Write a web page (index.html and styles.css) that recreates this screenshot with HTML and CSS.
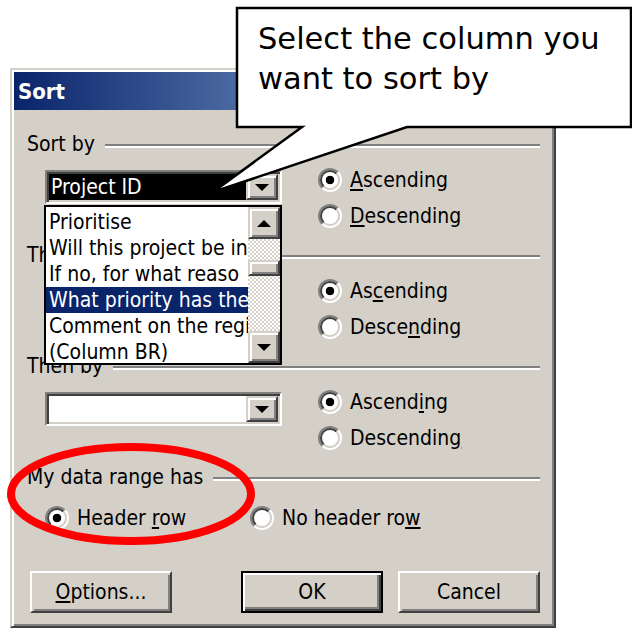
FILE: index.html
```html
<!DOCTYPE html>
<html lang="en">
<head>
<meta charset="utf-8">
<title>Sort</title>
<link rel="stylesheet" href="styles.css">
</head>
<body>
  <div class="dialog">
    <div class="titlebar">Sort</div>
    <div class="dlg-body">
      <section class="group">
        <div class="group-head"><span class="group-label">Sort by</span><span class="etch"></span></div>
        <div class="group-row">
          <div class="combo"><span class="combo-value sel">Project ID</span><span class="combo-btn"><i class="arrow-down"></i></span></div>
          <div class="radio-col">
            <div class="opt"><span class="radio on"></span><span><u>A</u>scending</span></div>
            <div class="opt"><span class="radio"></span><span><u>D</u>escending</span></div>
          </div>
        </div>
      </section>
      <section class="group">
        <div class="group-head"><span class="group-label">Then by</span><span class="etch"></span></div>
        <div class="group-row">
          <div class="combo"><span class="combo-value"></span><span class="combo-btn"><i class="arrow-down"></i></span></div>
          <div class="radio-col">
            <div class="opt"><span class="radio on"></span><span>As<u>c</u>ending</span></div>
            <div class="opt"><span class="radio"></span><span>Desce<u>n</u>ding</span></div>
          </div>
        </div>
      </section>
      <section class="group">
        <div class="group-head"><span class="group-label">Then by</span><span class="etch"></span></div>
        <div class="group-row">
          <div class="combo"><span class="combo-value"></span><span class="combo-btn"><i class="arrow-down"></i></span></div>
          <div class="radio-col">
            <div class="opt"><span class="radio on"></span><span>Ascend<u>i</u>ng</span></div>
            <div class="opt"><span class="radio"></span><span>Descendin<u>g</u></span></div>
          </div>
        </div>
      </section>
      <section class="group-range">
        <div class="group-head"><span class="group-label">My data range has</span><span class="etch"></span></div>
        <div class="range-row">
          <div class="opt opt-wide"><span class="radio on"></span><span>Header <u>r</u>ow</span></div>
          <div class="opt"><span class="radio"></span><span>No header ro<u>w</u></span></div>
        </div>
      </section>
      <div class="buttons">
        <button class="btn"><u>O</u>ptions...</button>
        <div class="btn-pair">
          <button class="btn btn-default">OK</button>
          <button class="btn">Cancel</button>
        </div>
      </div>
    </div>

    <!-- open drop-down of the first combo box -->
    <div class="droplist">
      <ul class="droplist-items">
        <li>Prioritise</li>
        <li>Will this project be in</li>
        <li>If no, for what reaso</li>
        <li class="sel">What priority has the</li>
        <li>Comment on the regi</li>
        <li>(Column BR)</li>
      </ul>
      <div class="scrollbar">
        <span class="sb-btn"><i class="arrow-up"></i></span>
        <div class="sb-track"><span class="sb-thumb"></span></div>
        <span class="sb-btn"><i class="arrow-down"></i></span>
      </div>
    </div>
  </div>

  <div class="callout">
    <svg class="callout-shape" width="432" height="190" viewBox="0 0 432 190">
      <path d="M37 2 H431 V121 H207 L13 186 L102 121 H37 Z"/>
    </svg>
    <p class="callout-text">Select the column you<br>want to sort by</p>
  </div>

  <svg class="ring" width="632" height="630" viewBox="0 0 632 630">
    <ellipse cx="131" cy="494" rx="120" ry="47"/>
  </svg>
</body>
</html>
```

FILE: styles.css
```css
html, body {
  margin: 0;
}

body {
  position: relative;
  width: 632px;
  height: 630px;
  overflow: hidden;
  background: #fff;
  color: #000;
  font-family: "DejaVu Sans Condensed", "DejaVu Sans", sans-serif;
  font-stretch: condensed;
  font-size: 21px;
}

/* classic window frame */
.dialog {
  position: relative;
  box-sizing: border-box;
  width: 546px;
  height: 560px;
  margin: 68px 0 0 10px;
  padding: 2px;
  background: #d4d0c8;
  border: 2px solid;
  border-color: #d4d0c8 #404040 #404040 #d4d0c8;
  box-shadow: inset 2px 2px #fff, inset -2px -2px #808080;
}

.titlebar {
  height: 38px;
  padding-left: 4px;
  line-height: 40px;
  font-size: 22px;
  font-weight: bold;
  color: #fff;
  background: linear-gradient(90deg, #0a246a, #a6caf0);
}

.dlg-body {
  padding: 24px 12px 0 13px;
}

.group {
  height: 111px;
}

.group-head {
  display: flex;
  align-items: center;
  gap: 10px;
  height: 24px;
}

.group-label {
  padding-bottom: 4px;
  line-height: 24px;
  white-space: nowrap;
}

.etch {
  flex: 1;
  height: 0;
  border-top: 2px solid #808080;
  border-bottom: 2px solid #fff;
}

.group-row {
  display: flex;
  padding: 4px 0 0 18px;
}

/* sunken combo box */
.combo {
  display: flex;
  box-sizing: border-box;
  width: 237px;
  height: 34px;
  margin-top: 8px;
  padding: 2px;
  background: #fff;
  border: 2px solid;
  border-color: #808080 #fff #fff #808080;
  box-shadow: inset 2px 2px #404040, inset -2px -2px #d4d0c8;
}

.combo-value {
  flex: 1;
  padding-left: 2px;
  line-height: 27px;
  white-space: nowrap;
}

.combo-value.sel {
  background: #000;
  color: #fff;
}

.combo-btn,
.sb-btn {
  display: grid;
  place-items: center;
  box-sizing: border-box;
  width: 32px;
  background: #d4d0c8;
  border: 2px solid;
  border-color: #d4d0c8 #404040 #404040 #d4d0c8;
  box-shadow: inset 2px 2px #fff, inset -2px -2px #808080;
}

.arrow-down {
  width: 0;
  height: 0;
  border-left: 7px solid transparent;
  border-right: 7px solid transparent;
  border-top: 7px solid #000;
}

.arrow-up {
  width: 0;
  height: 0;
  border-left: 7px solid transparent;
  border-right: 7px solid transparent;
  border-bottom: 7px solid #000;
}

.radio-col {
  display: flex;
  flex-direction: column;
  margin-left: 36px;
}

.opt {
  display: flex;
  align-items: center;
  gap: 8px;
  height: 36px;
  white-space: nowrap;
}

.opt u,
.btn u {
  text-underline-offset: 2px;
}

/* option button: two bevelled rings with a dot */
.radio {
  display: grid;
  flex: none;
  box-sizing: border-box;
  width: 24px;
  height: 24px;
  border-radius: 50%;
  border: 2px solid;
  border-color: #808080 #fff #fff #808080;
}

.radio::before {
  content: "";
  box-sizing: border-box;
  border-radius: 50%;
  border: 2px solid;
  border-color: #404040 #d4d0c8 #d4d0c8 #404040;
  background: #fff;
}

.radio.on::before {
  background: radial-gradient(circle, #000 0 4px, #fff 4.6px);
}

.range-row {
  display: flex;
  padding: 9px 0 0 18px;
}

.opt-wide {
  width: 205px;
}

.buttons {
  display: flex;
  justify-content: space-between;
  margin-top: 35px;
  padding-left: 3px;
}

.btn-pair {
  display: flex;
  gap: 15px;
}

.btn {
  box-sizing: border-box;
  width: 142px;
  height: 42px;
  padding: 0;
  font: inherit;
  color: #000;
  background: #d4d0c8;
  border: 2px solid;
  border-color: #fff #404040 #404040 #fff;
  box-shadow: inset 2px 2px #d4d0c8, inset -2px -2px #808080;
}

.btn-default {
  border: 2px solid #000;
  box-shadow: inset 2px 2px #fff, inset -2px -2px #404040, inset -4px -4px #808080;
}

/* drop-down list lying over the lower groups */
.droplist {
  position: absolute;
  left: 32px;
  top: 135px;
  display: flex;
  box-sizing: border-box;
  width: 238px;
  height: 160px;
  background: #fff;
  border: 2px solid #000;
}

.droplist-items {
  flex: 1;
  min-width: 0;
  margin: 0;
  padding: 2px 0 0;
  list-style: none;
  overflow: hidden;
}

.droplist-items li {
  height: 26px;
  padding-left: 3px;
  line-height: 26px;
  white-space: nowrap;
  overflow: hidden;
}

.droplist-items li.sel {
  background: #0a246a;
  color: #fff;
}

.scrollbar {
  display: flex;
  flex-direction: column;
  width: 32px;
}

.sb-btn {
  height: 32px;
  flex: none;
}

.sb-track {
  flex: 1;
  display: flex;
  flex-direction: column;
  background: repeating-conic-gradient(#fff 0 25%, #d4d0c8 0 50%) 0 0 / 4px 4px;
}

.sb-thumb {
  box-sizing: border-box;
  height: 16px;
  margin-top: 21px;
  background: #d4d0c8;
  border: 2px solid;
  border-color: #d4d0c8 #404040 #404040 #d4d0c8;
  box-shadow: inset 2px 2px #fff, inset -2px -2px #808080;
}

/* speech-bubble note */
.callout {
  position: absolute;
  left: 200px;
  top: 6px;
  display: grid;
  width: 432px;
  height: 190px;
}

.callout-shape,
.callout-text {
  grid-area: 1 / 1;
}

.callout-shape path {
  fill: #fff;
  stroke: #000;
  stroke-width: 2.5;
  stroke-linejoin: miter;
}

.callout-text {
  margin: 0;
  padding: 13px 0 0 58px;
  font-family: "DejaVu Sans", sans-serif;
  font-stretch: normal;
  font-size: 30.5px;
  line-height: 40px;
}

.ring {
  position: absolute;
  left: 0;
  top: 0;
  pointer-events: none;
}

.ring ellipse {
  fill: none;
  stroke: #f00;
  stroke-width: 8;
}
```
